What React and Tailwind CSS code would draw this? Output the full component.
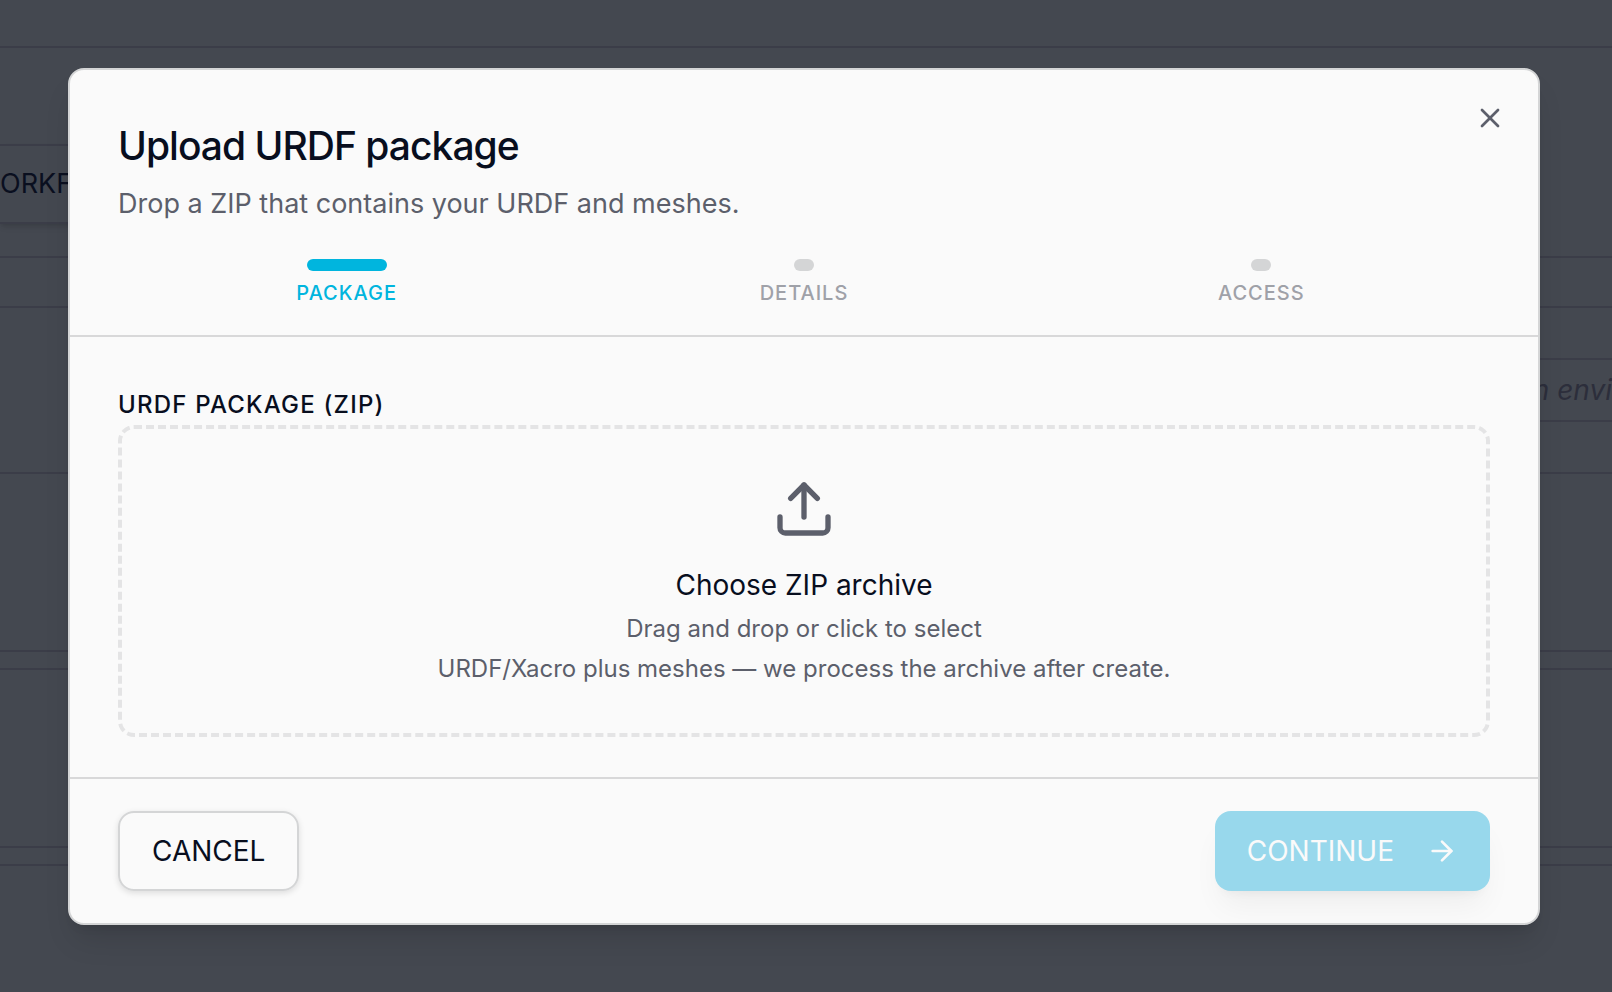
import { useState } from 'react';
import { ArrowRight, Upload, X } from 'lucide-react';

const STEPS = [
  { id: 'package', label: 'PACKAGE' },
  { id: 'details', label: 'DETAILS' },
  { id: 'access', label: 'ACCESS' },
];

function PageBehind() {
  return (
    <div aria-hidden="true" className="absolute inset-0 overflow-hidden bg-[#444850]">
      <div className="h-12 border-b-2 border-[#3b3d48]" />
      <div className="h-[210px] border-b-2 border-[#3b3d48] pt-24">
        <div className="flex h-20 w-[72px] items-center border-y-2 border-[#3b3d48] text-[27px] text-[#0a0f1f] shadow-md">
          ORKF
        </div>
      </div>
      <div className="h-[50px] border-b-2 border-[#3b3d48]" />
      <div className="h-[166px] border-b-2 border-[#3b3d48] pt-[50px]">
        <div className="ml-auto flex h-16 w-1/2 items-center justify-end border-y-2 border-[#3b3d48] text-[28px] text-[#2c2e3b] italic">
          n envi
        </div>
      </div>
      <div className="h-[178px] border-b-2 border-[#3b3d48]" />
      <div className="h-[18px] border-b-2 border-[#3b3d48]" />
      <div className="h-[178px] border-b-2 border-[#3b3d48]" />
      <div className="h-[18px] border-b-2 border-[#3b3d48]" />
    </div>
  );
}

function Stepper({ current }) {
  return (
    <ol className="mt-[33px] flex">
      {STEPS.map((step) => (
        <li key={step.id} className="flex flex-1 flex-col items-center gap-2">
          <span
            className={
              step.id === current
                ? 'h-3 w-20 rounded-full bg-[#00b5de]'
                : 'h-3 w-5 rounded-full bg-[#d4d5d6]'
            }
          />
          <span
            className={
              step.id === current
                ? 'text-xl leading-7 font-medium tracking-wider text-[#00b5de]'
                : 'text-xl leading-7 font-medium tracking-wider text-[#9fa1a8]'
            }
          >
            {step.label}
          </span>
        </li>
      ))}
    </ol>
  );
}

export default function App() {
  const [file, setFile] = useState(null);

  return (
    <div className="relative flex min-h-screen items-center pr-[72px] pl-[68px] font-['Inter',sans-serif]">
      <PageBehind />

      <div
        role="dialog"
        aria-labelledby="upload-title"
        className="relative w-full rounded-2xl border-2 border-[#d4d5d6] bg-[#fafafa] text-[#080e1e] shadow-[0_20px_30px_-6px_rgba(0,0,0,0.12),0_8px_12px_-8px_rgba(0,0,0,0.12)]"
      >
        {/* Header */}
        <div className="border-b-2 border-[#d8d8d9] px-12 pt-12 pb-7">
          <h2 id="upload-title" className="text-[39px] leading-14 font-medium tracking-tight">
            Upload URDF package
          </h2>
          <p className="mt-2 text-[27px] leading-11 text-[#5c5f6b]">
            Drop a ZIP that contains your URDF and meshes.
          </p>
          <Stepper current="package" />
        </div>

        <button type="button" aria-label="Close" className="absolute top-8 right-8 text-[#5c5f6b]">
          <X className="size-8" />
        </button>

        {/* Package picker */}
        <div className="px-12 pt-12 pb-10">
          <label htmlFor="urdf-zip" className="block text-2xl leading-10 font-medium tracking-wider">
            URDF PACKAGE (ZIP)
          </label>
          <label
            htmlFor="urdf-zip"
            className="flex cursor-pointer flex-col items-center rounded-2xl border-4 border-dashed border-[#e4e4e5] py-12 text-center"
          >
            <Upload className="size-16 text-[#5c5f6b]" />
            <span className="mt-6 text-[28px] leading-10">
              {file ? file.name : 'Choose ZIP archive'}
            </span>
            <span className="mt-2 text-2xl text-[#5c5f6b]">
              Drag and drop or click to select
            </span>
            <span className="mt-2 text-2xl text-[#5c5f6b]">
              URDF/Xacro plus meshes — we process the archive after create.
            </span>
          </label>
          <input
            id="urdf-zip"
            type="file"
            accept=".zip"
            className="sr-only"
            onChange={(e) => setFile(e.target.files[0])}
          />
        </div>

        {/* Footer */}
        <div className="flex justify-between border-t-2 border-[#d8d8d9] px-12 py-8">
          <button
            type="button"
            className="h-20 rounded-2xl border-2 border-[#d4d5d6] px-8 text-[28px] shadow-[0_2px_6px_rgba(0,0,0,0.12)]"
          >
            CANCEL
          </button>
          <button
            type="button"
            disabled={!file}
            className="flex h-20 items-center gap-8 rounded-2xl bg-[#98d8ec] px-8 text-[28px] text-[#fafafa] shadow-[0_20px_30px_-6px_rgba(0,0,0,0.05),0_8px_12px_-8px_rgba(0,0,0,0.06)]"
          >
            CONTINUE
            <ArrowRight className="size-8" />
          </button>
        </div>
      </div>
    </div>
  );
}
